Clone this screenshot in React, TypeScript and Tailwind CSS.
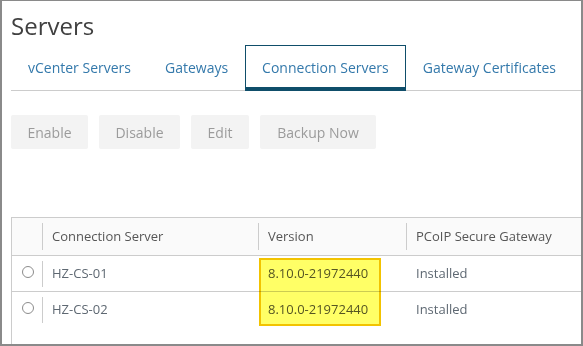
import React from "react";

const tabs = [
  { label: "vCenter Servers", active: false },
  { label: "Gateways", active: false },
  { label: "Connection Servers", active: true },
  { label: "Gateway Certificates", active: false },
];

const buttons = [
  { label: "Enable", w: "w-[77px]" },
  { label: "Disable", w: "w-[81px]" },
  { label: "Edit", w: "w-[58px]" },
  { label: "Backup Now", w: "w-[116px]" },
];

const rows = [
  { name: "HZ-CS-01", version: "8.10.0-21972440", gateway: "Installed" },
  { name: "HZ-CS-02", version: "8.10.0-21972440", gateway: "Installed" },
];

function Sep({ h = "h-[27px]" }: { h?: string }) {
  return <div className={`w-px ${h} bg-[#cccccc] shrink-0`} />;
}

export default function App() {
  return (
    <div
      className="relative w-[583px] h-[346px] bg-white border-t border-l-2 border-r-2 border-b-2 border-[#8a8a8a] overflow-hidden flex flex-col"
      style={{ fontFamily: '"Open Sans", "Liberation Sans", sans-serif' }}
    >
      <div className="pl-[9px] flex flex-col flex-1">
        <h1 className="pt-[9px] text-[24px] leading-[32px] text-[#404040]">Servers</h1>

        {/* tabs */}
        <div className="mt-[3px] flex h-[46px] border-b border-[#cccccc] w-[700px]">
          {tabs.map((t) =>
            t.active ? (
              <div
                key={t.label}
                className="h-[46px] -mb-px border-t border-l border-r border-b-4 border-[#0f4e6a] pl-[16px] pr-[16px] pt-[12px] text-[14px] leading-[20px] text-[#3479ab] whitespace-nowrap"
              >
                {t.label}
              </div>
            ) : (
              <div
                key={t.label}
                className="h-[45px] px-[17px] pt-[13px] text-[14px] leading-[20px] text-[#3479ab] whitespace-nowrap"
              >
                {t.label}
              </div>
            )
          )}
        </div>

        {/* action buttons */}
        <div className="mt-[24px] flex gap-[11px]">
          {buttons.map((b) => (
            <div
              key={b.label}
              className={`${b.w} h-[34px] rounded-[2px] bg-[#f3f3f3] flex items-center justify-center text-[14px] text-[#9b9b9b] whitespace-nowrap`}
            >
              {b.label}
            </div>
          ))}
        </div>

        {/* datagrid */}
        <div className="mt-[68px] w-[700px] flex-1 border-t border-l border-[#cccccc] text-[13px]">
          <div className="h-[38px] bg-[#fafafa] border-b border-[#cccccc] flex items-center text-[#565656]">
            <div className="w-[30px]" />
            <Sep />
            <div className="w-[215px] pl-[9px] whitespace-nowrap">Connection Server</div>
            <Sep />
            <div className="w-[147px] pl-[9px] whitespace-nowrap">Version</div>
            <Sep />
            <div className="pl-[9px] whitespace-nowrap">PCoIP Secure Gateway</div>
          </div>
          {rows.map((r, i) => (
            <div
              key={r.name}
              className={`h-[36px] flex items-center text-[#5e6872] ${i === 0 ? "border-b border-[#cccccc]" : ""}`}
            >
              <div className="w-[30px] pl-[10px] -mt-[4px]">
                <div className="w-[12px] h-[12px] rounded-full border border-[#8c8c8c] bg-white" />
              </div>
              <Sep h="h-[26px]" />
              <div className="w-[215px] pl-[9px] whitespace-nowrap">{r.name}</div>
              <div className="w-px" />
              <div className="w-[147px] pl-[9px] whitespace-nowrap text-[#555555]">{r.version}</div>
              <div className="w-px" />
              <div className="pl-[9px] whitespace-nowrap">{r.gateway}</div>
            </div>
          ))}
        </div>
      </div>

      {/* highlight annotation */}
      <div className="absolute left-[257px] top-[257px] w-[122px] h-[68px] border-2 border-[#f2c300] bg-[#ffff66] mix-blend-multiply pointer-events-none" />
    </div>
  );
}
